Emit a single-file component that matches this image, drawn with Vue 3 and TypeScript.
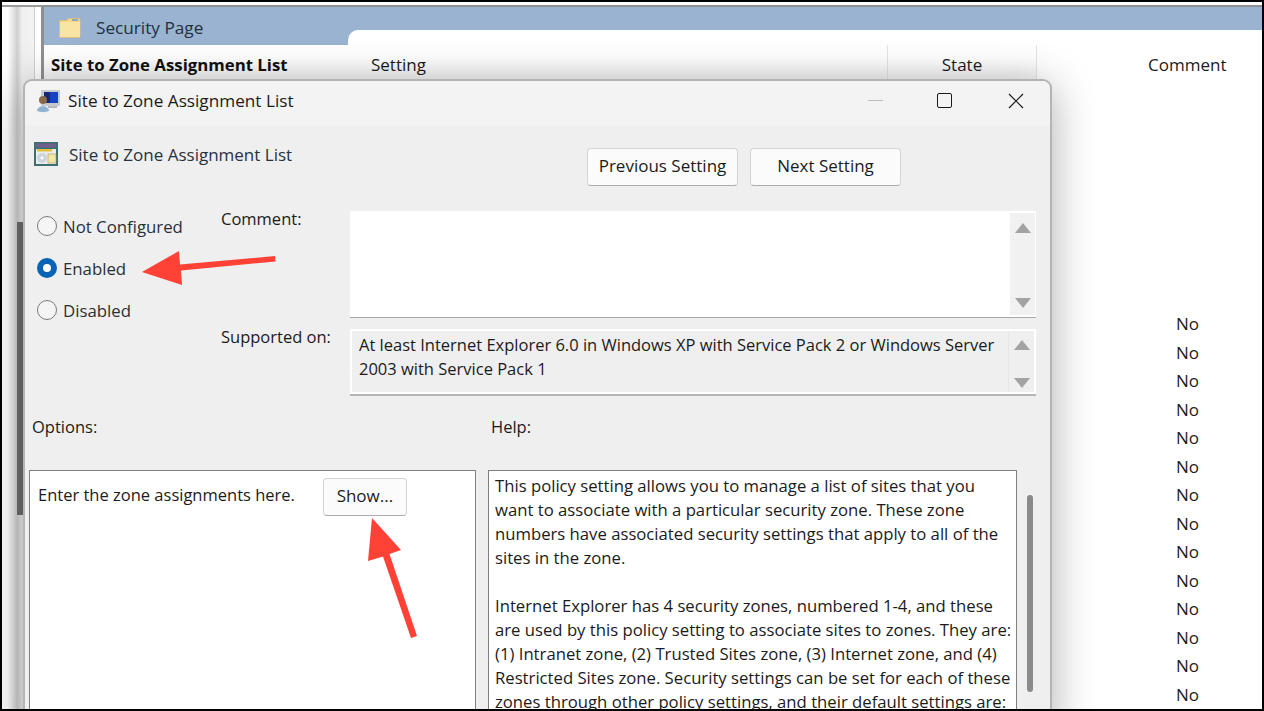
<script setup lang="ts">
const rows: number[] = Array.from({ length: 14 }, (_, i) => i)
const helpLines: string[] = [
  'This policy setting allows you to manage a list of sites that you',
  'want to associate with a particular security zone. These zone',
  'numbers have associated security settings that apply to all of the',
  'sites in the zone.',
  '\u00a0',
  'Internet Explorer has 4 security zones, numbered 1-4, and these',
  'are used by this policy setting to associate sites to zones. They are:',
  '(1) Intranet zone, (2) Trusted Sites zone, (3) Internet zone, and (4)',
  'Restricted Sites zone. Security settings can be set for each of these',
  'zones through other policy settings, and their default settings are:'
]
</script>

<template>
  <div class="frame">
    <div class="screen">
      <aside class="side">
        <div class="side-track"><div class="side-thumb"></div></div>
        <div class="side-gap"></div>
      </aside>
      <main class="console">
        <div class="banner">
          <svg class="folder" width="22" height="20" viewBox="0 0 22 20">
            <path d="M.5 2.500 H8 L9.500 .5 H21 V19.500 H.5 Z" fill="#f5d987" stroke="#dcc07a" stroke-width="1" />
            <rect x="1" y="4" width="20" height="15" fill="#f9e4a4" />
            <rect x="13" y="1" width="6" height="2" fill="#8fa8c4" />
          </svg>
          <span class="banner-title">Security Page</span>
          <div class="tab"></div>
        </div>
        <div class="thead">
          <div class="th-name">Site to Zone Assignment List</div>
          <div class="th-setting">Setting</div>
          <div class="th-state">State</div>
          <div class="th-comment">Comment</div>
        </div>
        <div class="rows">
          <div v-for="r in rows" :key="r" class="row">No</div>
        </div>
      </main>

      <section class="dialog">
        <header class="titlebar">
          <svg class="app-icon" width="24" height="24" viewBox="0 0 24 24">
            <rect x="5" y="1" width="19" height="16" rx="1" fill="#c6c9cf" />
            <rect x="8" y="3" width="14" height="11" fill="#1642c8" />
            <rect x="8" y="3" width="6" height="11" fill="#14287a" />
            <path d="M12 17 H21 V19 H12 Z" fill="#b5b8be" />
            <circle cx="7" cy="11" r="4" fill="#8a6a4c" />
            <path d="M1 22 C1 15.500 13 15.500 13 22 C9 23.500 5 23.500 1 22 Z" fill="#8fb2d2" />
          </svg>
          <span class="title-text">Site to Zone Assignment List</span>
          <div class="win-buttons">
            <div class="win-min"></div>
            <div class="win-max"></div>
            <svg class="win-close" width="16" height="16" viewBox="0 0 16 16">
              <path d="M1 1 L15 15 M15 1 L1 15" stroke="#1a1a1a" stroke-width="1.2" fill="none" />
            </svg>
          </div>
        </header>

        <div class="body">
          <div class="head">
            <div class="policy">
              <svg width="24" height="24" viewBox="0 0 24 24">
                <rect width="24" height="24" fill="#3d6f70" />
                <rect x="2" y="1.500" width="20" height="4" fill="#6f5f8c" />
                <rect x="2" y="7" width="20" height="15" fill="#ececec" />
                <rect x="3" y="7" width="15" height="2.500" fill="#e4bd3c" />
                <circle cx="8" cy="16" r="5" fill="#cfd3dd" />
                <circle cx="8" cy="16" r="1.400" fill="#fff" />
                <rect x="14" y="12" width="8" height="9" fill="#f2e7a8" stroke="#a99a58" stroke-width=".6" />
              </svg>
              <span class="policy-text">Site to Zone Assignment List</span>
            </div>
            <div class="nav">
              <button class="btn prev">Previous Setting</button>
              <button class="btn next">Next Setting</button>
            </div>
          </div>

          <div class="config">
            <div class="radios">
              <label class="radio"><span class="dot"></span>Not Configured</label>
              <label class="radio"><span class="dot on"></span>Enabled</label>
              <label class="radio"><span class="dot"></span>Disabled</label>
            </div>
            <div class="labels">
              <span>Comment:</span>
              <span class="lbl-sup">Supported on:</span>
            </div>
            <div class="boxes">
              <div class="box comment-box">
                <div class="box-content"></div>
                <div class="scroller">
                  <span class="up"></span><span class="down"></span>
                </div>
              </div>
              <div class="box sup-box">
                <div class="box-content sup-text">At least Internet Explorer 6.0 in Windows XP with Service Pack 2 or Windows Server<br />2003 with Service Pack 1</div>
                <div class="scroller plain">
                  <span class="up"></span><span class="down"></span>
                </div>
              </div>
            </div>
          </div>

          <div class="section-labels">
            <span class="lbl-options">Options:</span>
            <span>Help:</span>
          </div>

          <div class="panels">
            <div class="options">
              <span>Enter the zone assignments here.</span>
              <button class="btn show">Show...</button>
            </div>
            <div class="help">
              <div v-for="(l, i) in helpLines" :key="i" class="help-line">{{ l }}</div>
            </div>
            <div class="help-scroll"><div class="help-thumb"></div></div>
          </div>
        </div>
      </section>

      <svg class="annot" width="1264" height="711" viewBox="0 0 1264 711">
        <path d="M142 272 L179 251 L180 264.500 L275 256 L275.500 261.500 L181 270.500 L182 285 Z" fill="#ff4136" />
        <path d="M372 518 L401 550 L389.500 554 L417 636 L411 638 L383 556.500 L368 561 Z" fill="#ff4136" />
      </svg>
    </div>
  </div>
</template>

<style>
html, body { margin: 0; padding: 0; background: #000; overflow: hidden; }
</style>

<style scoped>
.frame {
  width: 1264px;
  height: 711px;
  box-sizing: border-box;
  border: 2px solid #000;
  background: #fff;
  overflow: hidden;
  font-family: "Open Sans", "Noto Sans", sans-serif;
  color: #1b1b1b;
  font-size: 17px;
}
.screen {
  position: relative;
  width: 1260px;
  height: 707px;
  display: flex;
  overflow: hidden;
  background: #fff;
}
.side {
  width: 42px;
  flex: none;
  display: flex;
  box-sizing: border-box;
  border-right: 3px solid #8f8f8f;
  margin-top: 3px;
  border-top: 2px solid #9a9a9a;
}
.side-track {
  width: 33px;
  flex: none;
  box-sizing: border-box;
  border-right: 1px solid #cfcfcf;
  background: linear-gradient(90deg, #fff 0, #fff 18%, #ececec 30%, #cfcfcf 48%, #efefef 62%, #f3f3f3 100%);
  padding-top: 215px;
  padding-left: 15px;
}
.side-thumb {
  width: 6px;
  height: 293px;
  background: #6f6f6f;
}
.side-gap { width: 6px; background: #fff; }
.console {
  flex: 1;
  display: flex;
  flex-direction: column;
  margin-top: 3px;
  border-top: 2px solid #8f8f8f;
  min-width: 0;
}
.banner {
  position: relative;
  height: 38px;
  background: #99b3d1;
  display: flex;
  align-items: center;
  flex: none;
  padding-left: 15px;
  padding-top: 3px;
  box-sizing: border-box;
}
.folder { flex: none; }
.banner-title { margin-left: 15px; font-size: 17.2px; color: #22303d; }
.tab {
  position: absolute;
  left: 304px;
  right: 0;
  bottom: 0;
  height: 15px;
  background: #fff;
  border-top-left-radius: 10px;
}
.thead {
  position: relative;
  height: 34px;
  flex: none;
  display: flex;
  align-items: stretch;
  background: linear-gradient(#fff 0, #fff 40%, #f4f4f4 100%);
  line-height: 39px;
}
.th-name { width: 327px; padding-left: 7px; box-sizing: border-box; font-weight: 700; color: #111; font-size: 16.8px; white-space: nowrap; }
.th-setting { width: 516px; flex: none; }
.th-state { width: 150px; flex: none; text-align: center; box-sizing: border-box; border-left: 1px solid #e4e4e4; border-right: 1px solid #e4e4e4; }
.th-comment { flex: 1; background: #fff; padding-left: 111px; }
.rows {
  display: flex;
  flex-direction: column;
  align-items: flex-start;
  padding-left: 1132px;
  padding-top: 231px;
}
.row { height: 28.5px; line-height: 28.5px; }

.dialog {
  position: absolute;
  left: 21px;
  top: 77px;
  width: 1029px;
  height: 660px;
  box-sizing: border-box;
  background: #efefef;
  border: 2px solid #b4b4b4;
  border-radius: 9px;
  box-shadow: 0 6px 44px rgba(0, 0, 0, .32);
  display: flex;
  flex-direction: column;
}
.titlebar {
  height: 44px;
  flex: none;
  background: #f3f3f3;
  border-radius: 8px 8px 0 0;
  display: flex;
  align-items: center;
  padding-left: 11px;
  padding-bottom: 5px;
  box-sizing: border-box;
}
.title-text { margin-left: 8px; font-size: 17.2px; }
.win-buttons { margin-left: auto; display: flex; align-items: center; }
.win-min { width: 15px; height: 1px; background: #bdbdbd; margin-right: 54px; }
.win-max { width: 15px; height: 15px; box-sizing: border-box; border: 1.500px solid #1a1a1a; border-radius: 2px; margin-right: 56px; }
.win-close { margin-right: 26px; }
.body { flex: 1; min-height: 0; display: flex; flex-direction: column; }
.head { height: 84px; flex: none; display: flex; box-sizing: border-box; position: relative; }
.policy { display: flex; align-items: center; height: 24px; padding-left: 9px; margin-top: 17px; }
.policy-text { margin-left: 11px; color: #27323d; }
.nav { position: absolute; left: 562px; top: 23px; display: flex; gap: 12px; }
.btn {
  font: inherit;
  color: #1b1b1b;
  background: #fbfbfb;
  border: 1px solid #d4d4d4;
  border-bottom-color: #adadad;
  border-radius: 4px;
  padding: 0 0 4px;
  height: 38px;
}
.prev { width: 151px; }
.next { width: 151px; }
.config { display: flex; height: 203px; flex: none; }
.radios { width: 196px; padding-left: 12px; box-sizing: border-box; display: flex; flex-direction: column; margin-top: -4px; font-size: 16.8px; }
.radio { display: flex; align-items: center; height: 42px; color: #2a2f36; }
.dot { width: 20px; height: 20px; box-sizing: border-box; border: 1.500px solid #7a7a7a; border-radius: 50%; margin-right: 6px; background: #f5f5f5; flex: none; }
.dot.on { border: 6px solid #0a63b5; background: #fff; }
.labels { width: 129px; display: flex; flex-direction: column; margin-top: -2px; box-sizing: border-box; font-size: 16.5px; }
.lbl-sup { margin-top: 95px; }
.boxes { width: 686px; display: flex; flex-direction: column; gap: 11px; margin-top: 2px; }
.box { display: flex; box-sizing: border-box; border-bottom: 1px solid #a9a9a9; }
.comment-box { height: 107px; flex: none; background: #fff; }
.sup-box { height: 67px; flex: none; background: #fff; padding: 2px; border-bottom: 2px solid #b6b6b6; }
.box-content { flex: 1; }
.sup-text { background: #efefef; padding: 2px 7px; font-size: 16.5px; line-height: 24px; white-space: nowrap; }
.scroller {
  width: 25px;
  margin: 2px 1px;
  background: #f1f1f1;
  display: flex;
  flex-direction: column;
  justify-content: space-between;
  align-items: center;
  padding: 10px 0 7px;
  box-sizing: border-box;
}
.scroller.plain { margin: 0; background: #efefef; border-left: 1px solid #e6e6e6; width: 26px; padding: 9px 0 4px; }
.up { width: 0; height: 0; border-left: 8px solid transparent; border-right: 8px solid transparent; border-bottom: 10px solid #a3a3a3; }
.down { width: 0; height: 0; border-left: 8px solid transparent; border-right: 8px solid transparent; border-top: 10px solid #a3a3a3; }
.section-labels { display: flex; height: 58px; flex: none; padding-top: 3px; box-sizing: border-box; font-size: 16.5px; }
.lbl-options { width: 466px; padding-left: 7px; box-sizing: border-box; }
.panels { display: flex; flex: 1; min-height: 0; padding-left: 4px; }
.options {
  width: 447px;
  box-sizing: border-box;
  background: #fff;
  border: 1.500px solid #7f7f7f;
  padding: 12px 8px;
  position: relative;
  flex: none;
  font-size: 16.5px;
  display: flex;
  align-items: flex-start;
}
.show { font-size: 17px; margin-left: 28px; width: 84px; height: 38px; margin-top: -5px; }
.help {
  width: 529px;
  margin-left: 12px;
  box-sizing: border-box;
  background: #fff;
  border: 1.500px solid #7f7f7f;
  padding: 3px 6px;
  flex: none;
  font-size: 16.7px;
  line-height: 24px;
  overflow: hidden;
}
.help-line { white-space: nowrap; }
.help-scroll { margin-left: 10px; padding-top: 25px; }
.help-thumb { width: 6px; height: 197px; background: #8a8a8a; border-radius: 3px; }
.annot { position: absolute; left: -2px; top: -2px; pointer-events: none; }
</style>
